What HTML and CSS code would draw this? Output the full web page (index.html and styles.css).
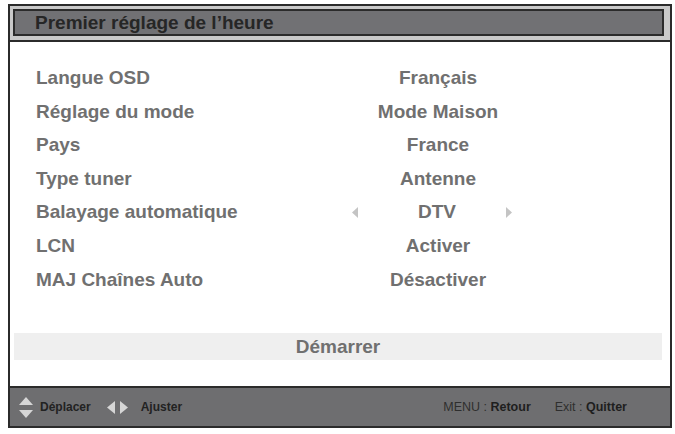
FILE: index.html
```html
<!DOCTYPE html>
<html>
<head>
    <meta charset="utf-8">
    <meta name="viewport" content="width=device-width, initial-scale=1.0">
    <title>Premier réglage de l'heure</title>

<link rel="stylesheet" href="styles.css">

</head>
<body>

  <div class="screen">

    <div class="head">
      <div class="head-box">Premier réglage de l’heure</div>
    </div>

    <div class="menu">
      <div class="row"><span class="label">Langue OSD</span><span class="value">Français</span></div>
      <div class="row"><span class="label">Réglage du mode</span><span class="value">Mode Maison</span></div>
      <div class="row"><span class="label">Pays</span><span class="value">France</span></div>
      <div class="row"><span class="label">Type tuner</span><span class="value">Antenne</span></div>
      <div class="row">
        <span class="label">Balayage automatique</span>
        <span class="value value-pick">
          <svg class="pick-arrow" width="6" height="11" viewBox="0 0 6 11"><polygon points="6,0 6,11 0,5.5"/></svg>
          <span class="pick-text">DTV</span>
          <svg class="pick-arrow" width="6" height="11" viewBox="0 0 6 11"><polygon points="0,0 6,5.5 0,11"/></svg>
        </span>
      </div>
      <div class="row"><span class="label">LCN</span><span class="value">Activer</span></div>
      <div class="row"><span class="label">MAJ Chaînes Auto</span><span class="value">Désactiver</span></div>
    </div>

    <div class="start">Démarrer</div>

    <div class="foot">
      <svg class="key-icon" width="14" height="21" viewBox="0 0 14 21">
        <polygon points="7,0 14,8 0,8"/>
        <polygon points="0,13 14,13 7,21"/>
      </svg>
      <b class="hint">Déplacer</b>
      <svg class="key-icon lr" width="21" height="13" viewBox="0 0 21 13">
        <polygon points="8,0 8,13 0,6.5"/>
        <polygon points="13,0 21,6.5 13,13"/>
      </svg>
      <b class="hint">Ajuster</b>
      <span class="foot-right">
        <span class="key">MENU : <b>Retour</b></span>
        <span class="key">Exit : <b>Quitter</b></span>
      </span>
    </div>

  </div>

</body>
</html>
```

FILE: styles.css
```css
/* общие стили */
body {
  margin: 0;
  background: #fff;
  font-family: "Liberation Sans", Arial, sans-serif;
}

.screen {
  box-sizing: border-box;
  width: 664px;
  height: 424px;
  margin: 4px 0 0 8px;
  border: 2px solid #2b2b2b;
  display: flex;
  flex-direction: column;
}

/* заголовок */
.head {
  background: #c9c9c9;
  padding: 3px 6px 4px 3px;
  border-bottom: 2px solid #2b2b2b;
}

.head-box {
  box-sizing: border-box;
  height: 27px;
  border: 2px solid #2b2b2b;
  background: #717174;
  color: #262626;
  font-size: 19px;
  font-weight: bold;
  line-height: 23px;
  padding-left: 20px;
}

/* список настроек */
.menu {
  margin-top: 19px;
  padding-left: 26px;
}

.row {
  display: grid;
  grid-template-columns: 300px 204px;
  height: 33.6px;
  line-height: 33.6px;
  font-size: 19px;
  font-weight: bold;
  color: #707070;
}

.value {
  text-align: center;
}

.value-pick {
  display: flex;
  align-items: center;
  padding: 0 28px 0 16px;
}

.pick-text {
  flex: 1;
  text-align: center;
  padding-left: 10px;
}

.pick-arrow {
  fill: #c4c4c4;
}

/* кнопка запуска */
.start {
  height: 27px;
  margin: 37px 8px 0 4px;
  background: #efefef;
  color: #707070;
  font-size: 19px;
  font-weight: bold;
  line-height: 27px;
  text-align: center;
}

/* подсказки внизу */
.foot {
  margin-top: auto;
  height: 38px;
  border-top: 2px solid #2b2b2b;
  background: #6e6e70;
  display: flex;
  align-items: center;
  padding-left: 9px;
  font-size: 12.5px;
  color: #2a2a2a;
}

.key-icon {
  fill: #d6d6d6;
  margin-right: 7px;
}

.key-icon.lr {
  margin-left: 16px;
  margin-right: 13px;
}

.hint {
  color: #222;
  font-size: 12px;
}

.foot-right {
  margin-left: auto;
  margin-right: 43px;
  display: flex;
  gap: 24px;
}

.key {
  color: #2e2e2e;
}

.key b {
  color: #1e1e1e;
}
```
